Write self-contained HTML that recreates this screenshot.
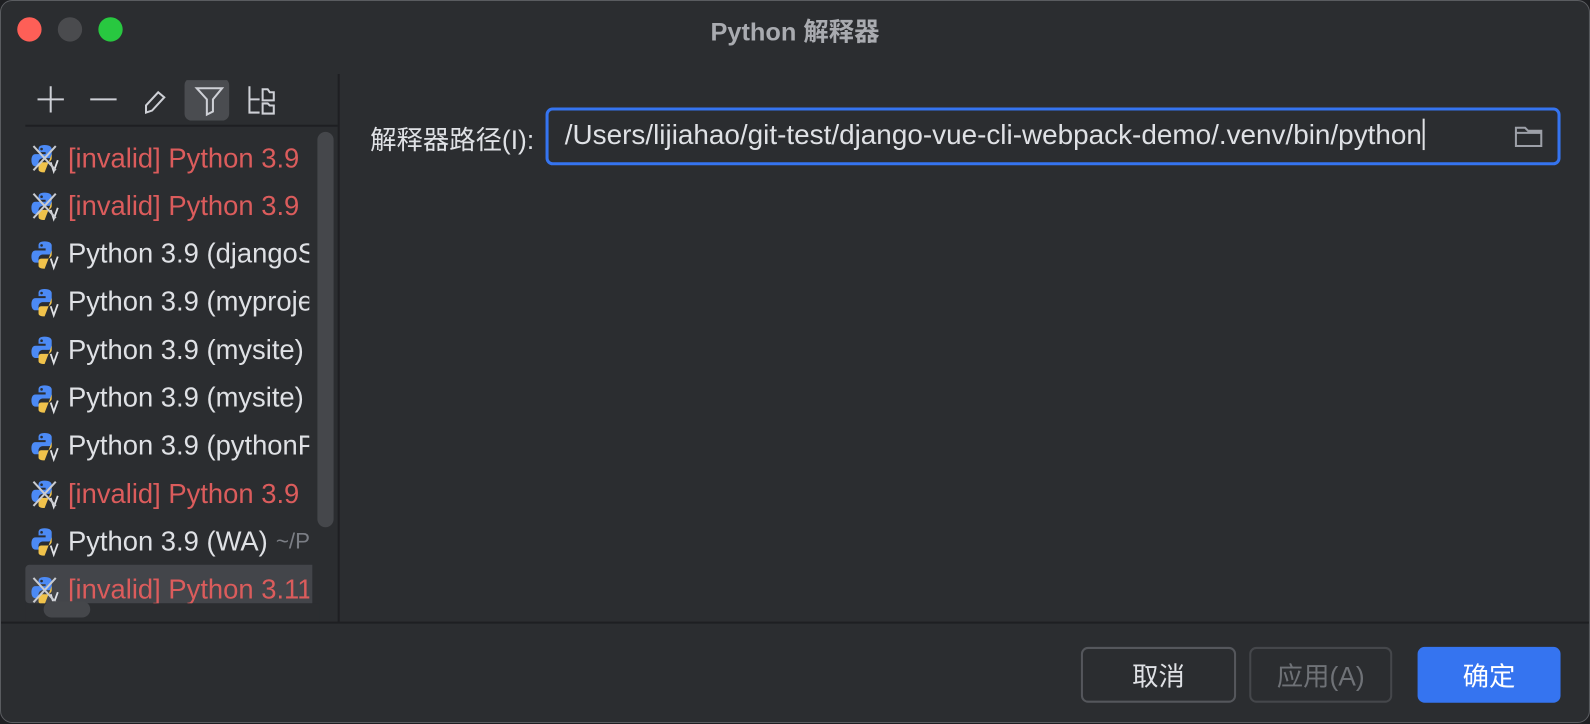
<!DOCTYPE html>
<html><head><meta charset="utf-8"><style>
*{margin:0;padding:0;box-sizing:border-box}
body{width:1590px;height:724px;background:#1e1f22;font-family:"Liberation Sans","Noto Sans CJK SC",sans-serif;overflow:hidden}
.win{position:absolute;left:0;top:0;width:1568px;height:713px;background:#2b2d30;border:1px solid #5a5c60;border-radius:12px;overflow:hidden;transform:scale(1.014);transform-origin:0 0}
.dot{position:absolute;top:16px;width:24px;height:24px;border-radius:50%}
.title{position:absolute;top:11px;left:0;width:1566px;text-align:center;color:#a9abb0;font-size:25px;font-weight:bold}
.sep{position:absolute;background:#1e1f22}
.item{position:absolute;left:28px;height:40px;font-size:27px;color:#dfe1e5;white-space:nowrap;display:flex;align-items:center;width:276px;overflow:hidden}
.item.bad{color:#db5c5c}
.item svg{margin-right:6px;flex:none}
.btn{position:absolute;top:637px;height:55px;border-radius:7px;font-size:26px;display:flex;align-items:center;justify-content:center}
</style></head><body>
<div class="win">
<div class="dot" style="left:16px;background:#fe5f57"></div>
<div class="dot" style="left:56px;background:#4a4b4e"></div>
<div class="dot" style="left:96px;background:#28c840"></div>
<div class="title">Python 解释器</div>
<div class="sep" style="left:332px;top:72px;width:2px;height:541px"></div>
<div class="sep" style="left:0;top:612px;width:1568px;height:2px"></div>
<div class="sep" style="left:24px;top:122px;width:308px;height:2px"></div>
<svg style="position:absolute;left:30px;top:78px" width="250" height="40" fill="none" stroke="#ced0d6" stroke-width="2">
<path d="M6 19h26M19 6v26"/><path d="M58 19h26"/>
<path d="M113 32l0-7 12-13 6 5-12 13z"/>
<rect x="151" y="-2" width="44" height="42" rx="7" fill="#4a4c50" stroke="none"/>
<path d="M163 8h25l-9 11v12l-6 3V19z"/>
<path d="M215 6v26h10M215 19h10"/><path d="M228 9h5l2 3h4v8h-11z M228 23h5l2 2h4v8h-11z"/>
</svg>
<div style="position:absolute;left:312px;top:129px;width:16px;height:390px;border-radius:8px;background:#45474b"></div>
<div style="position:absolute;left:24px;top:556px;width:283px;height:38px;background:#43454a;border-radius:4px 0 0 4px"></div>
<div id="list"></div>
<div style="position:absolute;left:24px;top:594px;width:290px;height:18px;background:#2b2d30"></div>
<div style="position:absolute;left:42px;top:592px;width:46px;height:16px;border-radius:8px;background:#45474b"></div>
<div style="position:absolute;left:364px;top:117px;font-size:26px;color:#dfe1e5">解释器路径(I):</div>
<div style="position:absolute;left:537px;top:105px;width:1001px;height:57px;border:3px solid #3574f0;border-radius:7px;background:#2b2d30"></div>
<div style="position:absolute;left:556px;top:116px;font-size:27.5px;color:#dfe1e5;white-space:nowrap">/Users/lijiahao/git-test/django-vue-cli-webpack-demo/.venv/bin/python<span style="border-left:2px solid #dfe1e5;margin-left:1px"></span></div>
<svg style="position:absolute;left:1492px;top:122px" width="30" height="24" fill="none" stroke="#9da0a8" stroke-width="2"><path d="M2 3h9l3 3h13v15H2z M2 8h25"/></svg>
<div class="btn" style="left:1065px;width:153px;border:2px solid #55575c;color:#dfe1e5">取消</div>
<div class="btn" style="left:1231px;width:141px;border:2px solid #45474b;color:#6f7277">应用(A)</div>
<div class="btn" style="left:1397px;width:141px;background:#3574f0;color:#fff">确定</div>
</div>
<script>
var items=[["[invalid] Python 3.9",1],["[invalid] Python 3.9",1],["Python 3.9 (djangoSite)",0],["Python 3.9 (myproject)",0],["Python 3.9 (mysite)",0],["Python 3.9 (mysite)",0],["Python 3.9 (pythonProject)",0],["[invalid] Python 3.9",1],["Python 3.9 (WA)<span style='color:#7b7e85;font-size:22px;margin-left:8px'>~/Py</span>",0],["[invalid] Python 3.11",1]];
var h='';
items.forEach(function(it,i){
var y=135+i*47.3;
var icon='<svg width="32" height="32" viewBox="0 0 32 32"><path d="M15 3c-5 0-6 2-6 4v3h7v2H6c-3 0-4 3-4 6s1 6 4 6h3v-4c0-2 2-4 4-4h6c2 0 3-1 3-3V7c0-2-2-4-7-4z" fill="#4c8af5"/><circle cx="12" cy="7" r="1.3" fill="#2b2d30"/><path d="M22 12v4c0 2-2 4-4 4h-6c-2 0-3 1-3 3v4c0 2 2 3 6 3" fill="#f0c24b"/><path d="M21 20l3 9 4-11" stroke="#dfe1e5" stroke-width="1.8" fill="none"/>'+(it[1]?'<path d="M4 4l22 24M26 4L4 28" stroke="#c9cbd0" stroke-width="2"/>':'')+'</svg>';
h+='<div class="item'+(it[1]?' bad':'')+'" style="top:'+y+'px">'+icon+it[0]+'</div>';
});
document.getElementById('list').innerHTML=h;
</script>
</body></html>
